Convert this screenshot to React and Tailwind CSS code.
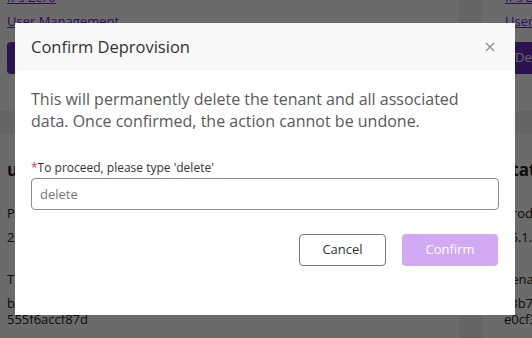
export default function App() {
  const font = { fontFamily: '"Open Sans", "Noto Sans", sans-serif' };
  return (
    <div className="relative w-[532px] h-[338px] overflow-hidden bg-[#f0f0f0]" style={font}>
      {/* background page */}
      <div className="grid grid-cols-[459px_1fr] grid-rows-[111px_1fr] gap-x-[23px] gap-y-[23px] h-full">
        <div className="bg-white pl-[7px] -mt-[12px] flex flex-col">
          <a className="text-[13px] leading-[18px] text-[#6d28d9] underline">IPs Zero</a>
          <a className="mt-[6px] text-[13px] leading-[18px] text-[#6d28d9] underline">User Management</a>
          <div className="mt-[12px] w-[180px] h-[32px] rounded-[4px] bg-[#6b2bbf] text-white text-[13px] flex items-center pl-3">Deprovision</div>
        </div>
        <div className="bg-white pl-[23px] -mt-[12px] flex flex-col">
          <a className="text-[13px] leading-[18px] text-[#6d28d9] underline">IPs Zero</a>
          <a className="mt-[6px] text-[13px] leading-[18px] text-[#6d28d9] underline">User Management</a>
          <div className="mt-[12px] w-[120px] h-[32px] rounded-l-[4px] bg-[#6b2bbf] text-white text-[13px] flex items-center pl-[10px]">Deprovision</div>
        </div>
        <div className="bg-white pl-[7px] pt-[24px] flex flex-col text-[13px] text-[#222] whitespace-nowrap">
          <div className="text-[17px] font-bold leading-[24px]">usage</div>
          <div className="mt-[22px] leading-[18px]">Product</div>
          <div className="mt-[6px] leading-[18px]">2.4.0</div>
          <div className="mt-[24px] leading-[18px]">Tenant ID</div>
          <div className="mt-[7px] leading-[16px]">b1e4c2d0-7a9f-4c3e-9d1b-</div>
          <div className="leading-[16px]">555f6accf87d</div>
        </div>
        <div className="bg-white pl-[22px] pt-[24px] flex flex-col text-[13px] text-[#222] whitespace-nowrap">
          <div className="text-[17px] font-bold leading-[24px] -ml-[2px]">Status</div>
          <div className="mt-[22px] leading-[18px]">Product</div>
          <div className="mt-[6px] leading-[18px]">v5.1.2</div>
          <div className="mt-[24px] leading-[18px]">Tenant</div>
          <div className="mt-[7px] leading-[16px]">c3b7</div>
          <div className="leading-[16px]">e0cf3</div>
        </div>
      </div>

      {/* overlay */}
      <div className="absolute inset-0 bg-black/[0.58]" />

      {/* modal */}
      <div className="absolute left-[15px] top-[23px] w-[500px] h-[292px] bg-white flex flex-col">
        <div className="h-[48px] bg-[#f8f8f8] pl-4 pr-[20px] flex items-center justify-between">
          <span className="text-[16.5px] text-[#333]">Confirm Deprovision</span>
          <svg width="10" height="10" viewBox="0 0 10 10" className="text-[#888]">
            <path d="M1 1L9 9M9 1L1 9" stroke="currentColor" strokeWidth="1.2" fill="none" />
          </svg>
        </div>
        <div className="px-4 pt-[18px] flex flex-col">
          <p className="text-[16px] leading-[21.5px] text-[#595959]">
            This will permanently delete the tenant and all associated data. Once confirmed, the action cannot be undone.
          </p>
          <label className="mt-[28px] text-[12px] leading-[16px] text-[#333]">
            <span className="text-[#e53935]">*</span>To proceed, please type 'delete'
          </label>
          <input
            className="mt-[2px] h-[32px] w-full border border-[#8c8c8c] rounded-[4px] px-[8px] text-[13px] text-[#333] placeholder:text-[#777] outline-none"
            placeholder="delete"
            style={font}
          />
          <div className="mt-[24px] flex justify-end gap-4 pr-[1px]">
            <button className="w-[87px] h-[32px] border border-[#777] rounded-[4px] text-[13px] text-[#333] bg-white" style={font}>Cancel</button>
            <button className="w-[96px] h-[32px] rounded-[4px] text-[13px] text-white bg-[#d1a9f2]" style={font}>Confirm</button>
          </div>
        </div>
      </div>
    </div>
  );
}
